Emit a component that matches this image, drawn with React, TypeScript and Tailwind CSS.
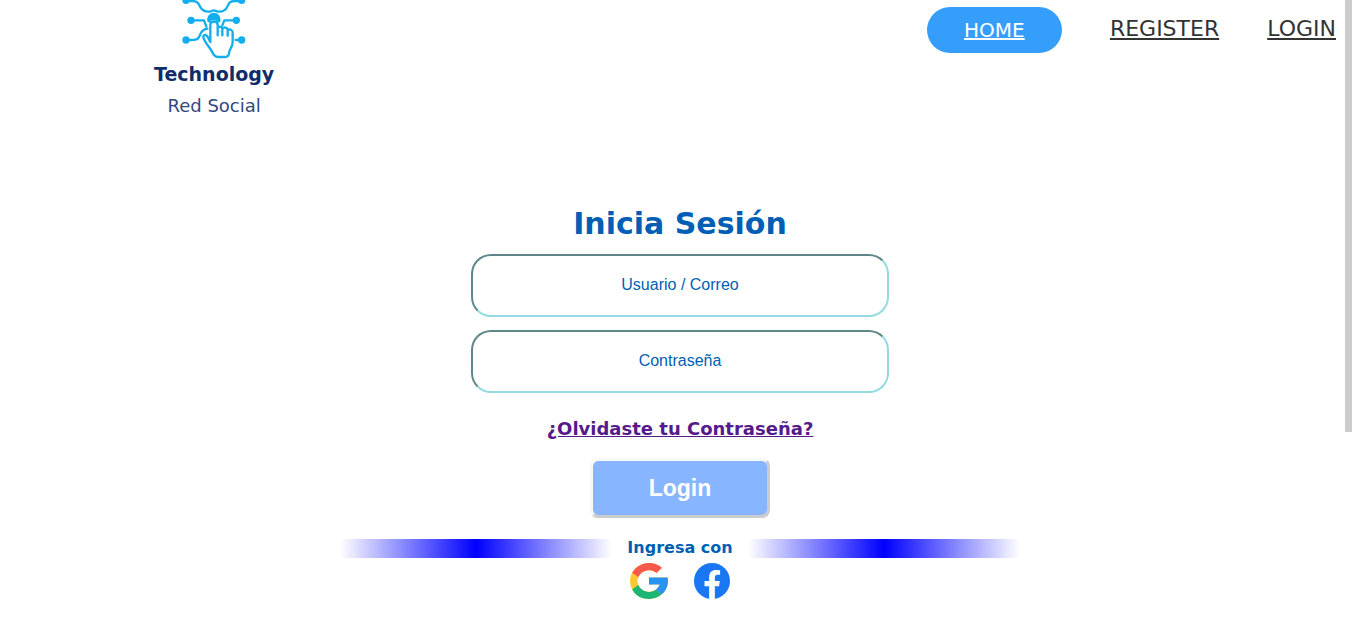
import React from "react";

const display = "font-['DejaVu_Sans',sans-serif]";

function TouchLogo() {
  return (
    <svg viewBox="120 0 210 180" className="h-[60px] w-[70px]" fill="none" stroke="#12aeee" strokeWidth="7" strokeLinecap="round" strokeLinejoin="round" aria-hidden="true">
      <g fill="#12aeee" stroke="none">
        <circle cx="141" cy="1" r="11" />
        <circle cx="308" cy="1" r="11" />
        <circle cx="156" cy="61" r="11" />
        <circle cx="292" cy="61" r="11" />
        <circle cx="141" cy="120" r="11" />
        <circle cx="308" cy="120" r="11" />
        <path d="M206 66 A20 20 0 1 1 243 66 L236 68 C235 57 214 57 213 68 Z" />
      </g>
      <path d="M148 3 H160 C178 3 180 14 185 23 C191 33 200 35 209 35 C217 35 218 31 224 31 C231 31 231 35 240 35 C252 35 261 30 265 20 C270 8 273 3 288 3 H302" />
      <path d="M164 61 H195 L202 80 M284 61 H256 L250 76" />
      <path d="M149 120 C174 121 179 116 182 107 C186 94 192 88 205 86 M290 120 H302" />
      <path d="M214 126 V75 C214 61 236 61 236 75 V106 M236 84 C240 78 250 80 250 87 V106 M250 86 C255 80 266 82 266 90 V107 M266 91 C272 86 281 89 281 98 V126 C281 143 270 148 270 159 C270 168 266 171 257 171 H237 C228 171 224 166 220 157 C213 142 205 137 199 125 C194 117 189 110 195 106 C203 102 208 112 214 126" />
    </svg>
  );
}

function GoogleIcon() {
  return (
    <svg viewBox="4 4 40 40" preserveAspectRatio="none" className="h-9 w-[38px]" aria-hidden="true">
      <path fill="#fbc934" d="M43.6 20H24v8h11.3C33.7 32.7 29.2 36 24 36a12 12 0 1 1 7.9-21l5.7-5.700A20 20 0 1 0 44 24c0-1.300-.1-2.700-.4-4z" />
      <path fill="#f9584c" d="M6.300 14.700l6.600 4.800A12 12 0 0 1 31.900 15l5.700-5.700A20 20 0 0 0 6.300 14.700z" />
      <path fill="#1bb673" d="M24 44c5.200 0 9.900-2 13.400-5.200l-6.200-5.200A12 12 0 0 1 12.700 28.500l-6.500 5A20 20 0 0 0 24 44z" />
      <path fill="#2993f3" d="M43.600 20H24v8h11.300a12 12 0 0 1-4.100 5.600l6.200 5.200C37 39.200 44 34 44 24c0-1.300-.1-2.700-.4-4z" />
    </svg>
  );
}

function FacebookIcon() {
  return (
    <svg viewBox="0 0 24 24" className="size-9" aria-hidden="true">
      <circle cx="12" cy="12" r="12" fill="#1977f3" />
      <path fill="#fff" d="M10.100 24v-8.500H7V12h3.100V9.400c0-3 1.800-4.700 4.600-4.700 1.300 0 2.700.2 2.700.2v3h-1.500c-1.500 0-2 .9-2 1.900V12h3.300l-.5 3.500h-2.800V24z" />
    </svg>
  );
}

function Field({ id, label, type }: { id: string; label: string; type: string }) {
  return (
    <input
      id={id}
      type={type}
      aria-label={label}
      placeholder={label}
      className="h-[63px] w-full rounded-[20px] border-2 border-t-[#5f8789] border-r-[#93dbe0] border-b-[#93dbe0] border-l-[#5f8789] bg-white pb-0.5 text-center text-base text-[#005fb5] outline-none placeholder:text-[#005fb5]"
    />
  );
}

function Beam() {
  return <div className="h-[19px] flex-1 bg-[linear-gradient(90deg,transparent,blue,transparent)]" />;
}

export default function App() {
  return (
    <div className="relative overflow-hidden bg-white pb-9 font-['Liberation_Sans',sans-serif]">
      <div className="absolute top-0 right-0 h-[432px] w-[7px] bg-[#ccc]" />
      <header className={`${display} flex items-start justify-between pr-4 pl-[154px]`}>
        <a href="#" className="flex flex-col items-center text-[#102c6b]">
          <TouchLogo />
          <span className="text-[19px] leading-7 font-bold">Technology</span>
          <span className="mt-1 text-lg leading-7 text-[#2f4a80]">Red Social</span>
        </a>
        <nav className="flex items-start gap-12 pt-[7px] text-[22px] text-[#333]">
          <a href="#home" className="flex h-[46px] w-[135px] items-center justify-center rounded-full bg-[#359efb] text-xl text-white underline">HOME</a>
          <a href="#register" className="leading-[44px] underline">REGISTER</a>
          <a href="#login" className="leading-[44px] underline">LOGIN</a>
        </nav>
      </header>

      <main className="flex flex-col items-center pt-[86px] pl-2">
        <form className="flex w-[418px] max-w-full flex-col items-center" onSubmit={(e) => e.preventDefault()}>
          <h1 className={`${display} mb-3 text-[30px] leading-9 font-bold text-[#005fb5]`}>Inicia Sesión</h1>
          <div className="flex w-full flex-col gap-[13px]">
            <Field id="user" label="Usuario / Correo" type="text" />
            <Field id="password" label="Contraseña" type="password" />
          </div>
          <a href="#recover" className={`${display} mt-6 text-lg leading-6 font-bold whitespace-nowrap text-[#551a8b] underline`}>
            ¿Olvidaste tu Contraseña?
          </a>
          <button type="submit" className="mt-[17px] h-[60px] w-[180px] rounded-lg border-[3px] border-t-[#f8f8f8] border-r-[#ccc] border-b-[#ccc] border-l-[#f8f8f8] bg-[#87b5ff] bg-clip-padding text-[23px] font-bold text-white">
            Login
          </button>
        </form>

        <div className="mt-5 flex w-[680px] max-w-full items-center">
          <Beam />
          <h2 className={`${display} w-[136px] text-center text-base leading-5 font-bold whitespace-nowrap text-[#005fb5]`}>Ingresa con</h2>
          <Beam />
        </div>
        <div className="mt-[5px] flex items-center gap-[26px]">
          <a href="#google" aria-label="Google"><GoogleIcon /></a>
          <a href="#facebook" aria-label="Facebook"><FacebookIcon /></a>
        </div>
      </main>
    </div>
  );
}
